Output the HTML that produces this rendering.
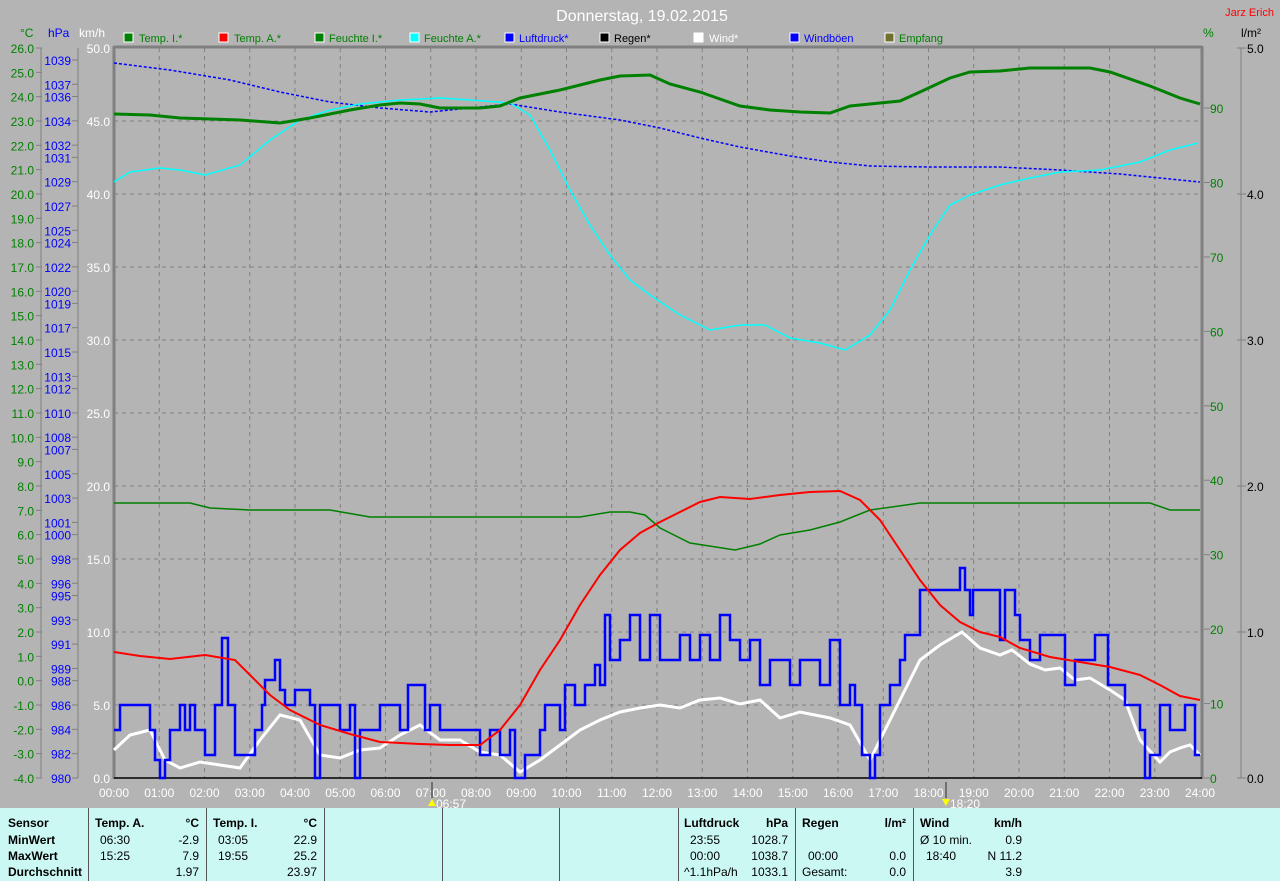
<!DOCTYPE html><html><head><meta charset="utf-8"><style>
body{margin:0;width:1280px;height:881px;background:#b4b4b4;overflow:hidden;font-family:"Liberation Sans",sans-serif}
svg{position:absolute;left:0;top:0}
text{font-family:"Liberation Sans",sans-serif;font-size:12px}
#tb{position:absolute;left:0;top:808px;width:1280px;height:73px;background:#ccf8f4;font-size:12px;color:#000}
#tb div{position:absolute;white-space:nowrap}
.b{font-weight:bold}
.v{position:absolute;top:0;width:1px;height:73px;background:#555}
</style></head><body>
<svg width="1280" height="808" viewBox="0 0 1280 808">
<text x="642" y="21" fill="#fff" font-size="16" text-anchor="middle" style="font-size:16px">Donnerstag, 19.02.2015</text>
<text x="1274" y="16" fill="#f00" text-anchor="end" style="font-size:11px">Jarz Erich</text>
<g id="legend">
<rect x="124" y="33" width="9" height="9" fill="#008000" stroke="#fff"/><text x="139" y="42" fill="#008000" style="font-size:11px">Temp. I.*</text>
<rect x="219" y="33" width="9" height="9" fill="#f00" stroke="#fff"/><text x="234" y="42" fill="#008000" style="font-size:11px">Temp. A.*</text>
<rect x="315" y="33" width="9" height="9" fill="#008000" stroke="#fff"/><text x="329" y="42" fill="#008000" style="font-size:11px">Feuchte I.*</text>
<rect x="410" y="33" width="9" height="9" fill="#0ff" stroke="#fff"/><text x="424" y="42" fill="#008000" style="font-size:11px">Feuchte A.*</text>
<rect x="505" y="33" width="9" height="9" fill="#00f" stroke="#fff"/><text x="519" y="42" fill="#00f" style="font-size:11px">Luftdruck*</text>
<rect x="600" y="33" width="9" height="9" fill="#000" stroke="#fff"/><text x="614" y="42" fill="#000" style="font-size:11px">Regen*</text>
<rect x="694" y="33" width="9" height="9" fill="#fff" stroke="#fff"/><text x="709" y="42" fill="#fff" style="font-size:11px">Wind*</text>
<rect x="790" y="33" width="9" height="9" fill="#00f" stroke="#fff"/><text x="804" y="42" fill="#00f" style="font-size:11px">Windböen</text>
<rect x="885" y="33" width="9" height="9" fill="#707030" stroke="#fff"/><text x="899" y="42" fill="#008000" style="font-size:11px">Empfang</text>
</g>
<text x="20" y="37" fill="#008000">°C</text><text x="48" y="37" fill="#00f">hPa</text><text x="79" y="37" fill="#fff">km/h</text>
<text x="1203" y="37" fill="#008000">%</text><text x="1241" y="37" fill="#000">l/m²</text>
<g stroke="#808080" stroke-dasharray="4,4" stroke-width="1" id="grid"></g>
<g id="axes"></g>
<rect x="113" y="47" width="89" height="0" fill="none"/>
<line x1="114" y1="47" x2="1202" y2="47" stroke="#808080" stroke-width="3"/>
<line x1="114" y1="46" x2="114" y2="779" stroke="#808080" stroke-width="3"/>
<line x1="1202" y1="46" x2="1202" y2="779" stroke="#808080" stroke-width="3"/>
<line x1="114" y1="778" x2="1202" y2="778" stroke="#000" stroke-width="1.5"/>
<polyline fill="none" stroke="#0000ff" stroke-width="1.5" stroke-dasharray="3,2" points="114,63 170,70 230,80 280,92 330,102 380,108 430,112 470,108 510,104 560,112 620,120 660,128 700,138 740,147 790,156 830,162 870,166 930,167 1000,167 1060,170 1120,174 1200,182"/>
<polyline fill="none" stroke="#00ffff" stroke-width="1.5" points="114,182 130,172 160,168 180,170 205,175 240,165 270,140 300,120 330,110 360,104 400,100 440,98 470,100 510,103 530,115 550,150 570,190 590,225 610,255 630,280 650,295 680,315 710,330 740,325 765,325 790,338 820,343 845,350 870,335 890,310 910,270 930,235 950,205 970,195 1000,185 1030,178 1060,172 1100,170 1140,162 1170,150 1198,143"/>
<polyline fill="none" stroke="#008000" stroke-width="3" points="114,114 150,115 180,118 240,120 280,123 310,118 350,110 380,105 400,103 420,104 440,108 480,108 500,106 520,98 560,90 600,80 620,76 650,75 670,84 700,92 740,106 770,110 800,112 830,113 850,106 880,103 900,101 920,92 950,78 970,72 1000,71 1030,68 1090,68 1110,72 1150,86 1180,98 1200,104"/>
<polyline fill="none" stroke="#008000" stroke-width="1.5" points="114,503 190,503 210,508 250,510 330,510 370,517 580,517 610,512 630,512 645,515 660,528 690,543 735,550 760,544 780,535 810,530 840,522 870,510 920,503 1150,503 1170,510 1200,510"/>
<polyline fill="none" stroke="#ffffff" stroke-width="3" points="114,750 130,735 150,730 165,760 180,768 200,762 220,765 240,768 260,740 280,715 300,720 320,755 340,758 360,750 380,748 400,735 420,725 440,740 460,740 480,752 500,755 520,772 540,760 560,745 580,730 600,720 620,712 640,708 660,705 680,708 700,700 720,698 740,704 760,700 780,718 800,712 830,718 850,725 870,760 880,740 900,700 920,660 940,645 962,632 980,648 1000,655 1012,650 1030,664 1045,670 1060,668 1075,680 1090,678 1110,690 1125,700 1140,740 1160,762 1170,752 1180,748 1190,745 1200,755"/>
<path fill="none" stroke="#0000ff" stroke-width="2.5" d="M114,730 H120 V705 H150 V730 H155 V760 H160 V778 H165 V760 H170 V730 H180 V705 H185 V730 H190 V705 H195 V730 H205 V755 H215 V705 H222 V638 H228 V705 H235 V755 H255 V730 H262 V705 H265 V680 H275 V660 H280 V690 H285 V705 H295 V690 H310 V705 H315 V778 H320 V705 H340 V730 H350 V705 H355 V778 H360 V730 H380 V705 H400 V730 H408 V685 H425 V730 H430 V705 H440 V730 H480 V755 H490 V730 H500 V755 H510 V730 H515 V778 H525 V755 H540 V730 H545 V705 H560 V730 H565 V685 H575 V705 H585 V685 H595 V665 H600 V685 H605 V615 H610 V660 H620 V640 H630 V615 H640 V660 H650 V615 H660 V660 H680 V635 H690 V660 H700 V635 H710 V660 H720 V615 H730 V640 H740 V660 H750 V640 H760 V685 H770 V660 H790 V685 H800 V660 H820 V685 H830 V640 H840 V705 H850 V685 H855 V705 H862 V755 H870 V778 H875 V755 H880 V705 H890 V685 H900 V660 H905 V635 H920 V590 H960 V568 H965 V590 H970 V615 H973 V590 H1000 V640 H1005 V590 H1015 V615 H1020 V640 H1030 V660 H1040 V635 H1065 V685 H1075 V660 H1095 V635 H1108 V685 H1125 V705 H1140 V730 H1145 V778 H1150 V755 H1160 V705 H1170 V730 H1185 V705 H1195 V755 H1200"/>
<polyline fill="none" stroke="#ff0000" stroke-width="2" points="114,652 140,656 170,659 205,655 235,660 250,675 270,695 290,710 320,725 350,734 380,742 420,744 450,745 480,745 500,730 520,705 540,670 560,640 580,605 600,575 620,550 640,533 660,522 680,512 700,502 720,497 750,499 780,495 810,492 840,491 860,500 880,520 900,550 920,580 940,605 960,622 980,632 1000,637 1020,648 1050,657 1080,662 1110,667 1140,675 1160,685 1180,696 1200,700"/>
<line x1="432" y1="782" x2="432" y2="798" stroke="#707070" stroke-width="2"/>
<line x1="946" y1="782" x2="946" y2="798" stroke="#707070" stroke-width="2"/>
<polygon points="428,806 432,799 436,806" fill="#ff0"/><text x="436" y="808" fill="#fff">06:57</text>
<polygon points="942,799 946,806 950,799" fill="#ff0"/><text x="950" y="808" fill="#fff">18:20</text>
</svg>
<div id="tb">
<div class="v" style="left:88px"></div><div class="v" style="left:206px"></div><div class="v" style="left:324px"></div><div class="v" style="left:442px"></div><div class="v" style="left:559px"></div><div class="v" style="left:678px"></div><div class="v" style="left:795px"></div><div class="v" style="left:913px"></div>
<div class="b" style="left:8px;top:8px">Sensor</div><div class="b" style="left:8px;top:25px">MinWert</div><div class="b" style="left:8px;top:41px">MaxWert</div><div class="b" style="left:8px;top:57px">Durchschnitt</div>
<div class="b" style="left:95px;top:8px">Temp. A.</div><div class="b" style="right:1081px;top:8px">°C</div>
<div style="left:100px;top:25px">06:30</div><div style="right:1081px;top:25px">-2.9</div>
<div style="left:100px;top:41px">15:25</div><div style="right:1081px;top:41px">7.9</div>
<div style="right:1081px;top:57px">1.97</div>
<div class="b" style="left:213px;top:8px">Temp. I.</div><div class="b" style="right:963px;top:8px">°C</div>
<div style="left:218px;top:25px">03:05</div><div style="right:963px;top:25px">22.9</div>
<div style="left:218px;top:41px">19:55</div><div style="right:963px;top:41px">25.2</div>
<div style="right:963px;top:57px">23.97</div>
<div class="b" style="left:684px;top:8px">Luftdruck</div><div class="b" style="right:492px;top:8px">hPa</div>
<div style="left:690px;top:25px">23:55</div><div style="right:492px;top:25px">1028.7</div>
<div style="left:690px;top:41px">00:00</div><div style="right:492px;top:41px">1038.7</div>
<div style="left:684px;top:57px">^1.1hPa/h</div><div style="right:492px;top:57px">1033.1</div>
<div class="b" style="left:802px;top:8px">Regen</div><div class="b" style="right:374px;top:8px">l/m²</div>
<div style="left:808px;top:41px">00:00</div><div style="right:374px;top:41px">0.0</div>
<div style="left:802px;top:57px">Gesamt:</div><div style="right:374px;top:57px">0.0</div>
<div class="b" style="left:920px;top:8px">Wind</div><div class="b" style="right:258px;top:8px">km/h</div>
<div style="left:920px;top:25px">Ø 10 min.</div><div style="right:258px;top:25px">0.9</div>
<div style="left:926px;top:41px">18:40</div><div style="right:258px;top:41px">N 11.2</div>
<div style="right:258px;top:57px">3.9</div>
</div>
<script>
var ns="http://www.w3.org/2000/svg";
var g=document.getElementById("grid"),a=document.getElementById("axes");
function el(p,t,at,tx){var e=document.createElementNS(ns,t);for(var k in at)e.setAttribute(k,at[k]);if(tx!=null)e.textContent=tx;p.appendChild(e);return e;}
for(var h=1;h<24;h++){var x=114+h*45.25;el(g,"line",{x1:x,y1:48,x2:x,y2:778});}
for(var k=1;k<10;k++){var y=48+73*k;el(g,"line",{x1:114,y1:y,x2:1200,y2:y});}
for(var h=0;h<=24;h++){var x=114+h*45.25;el(a,"text",{x:x,y:797,fill:"#fff","text-anchor":"middle"},(h<10?"0":"")+h+":00");}
el(a,"line",{x1:41,y1:48,x2:41,y2:778,stroke:"#808080"});
for(var v=26;v>=-4;v--){var y=48+(26-v)*24.333;el(a,"line",{x1:36,y1:y,x2:42,y2:y,stroke:"#808080"});el(a,"text",{x:34,y:y+5,fill:"#008000","text-anchor":"end"},v.toFixed(1));}
el(a,"line",{x1:78,y1:48,x2:78,y2:778,stroke:"#808080"});
[1039,1037,1036,1034,1032,1031,1029,1027,1025,1024,1022,1020,1019,1017,1015,1013,1012,1010,1008,1007,1005,1003,1001,1000,998,996,995,993,991,989,988,986,984,982,980].forEach(function(v){var y=778-(v-980)*12.17;el(a,"line",{x1:72,y1:y,x2:78,y2:y,stroke:"#808080"});el(a,"text",{x:71,y:y+5,fill:"#00f","text-anchor":"end"},v);});
for(var k=0;k<=10;k++){var y=48+73*k;el(a,"text",{x:110,y:y+5,fill:"#fff","text-anchor":"end"},(50-5*k).toFixed(1));}
for(var p=90;p>=0;p-=10){var y=778-p*7.444;el(a,"line",{x1:1204,y1:y,x2:1210,y2:y,stroke:"#808080"});el(a,"text",{x:1210,y:y+5,fill:"#008000"},p);}
el(a,"line",{x1:1241,y1:48,x2:1241,y2:778,stroke:"#808080"});
for(var k=0;k<=5;k++){var y=778-k*146;el(a,"line",{x1:1237,y1:y,x2:1246,y2:y,stroke:"#808080"});el(a,"text",{x:1247,y:y+5,fill:"#000"},k.toFixed(1));}
</script>
</body></html>
